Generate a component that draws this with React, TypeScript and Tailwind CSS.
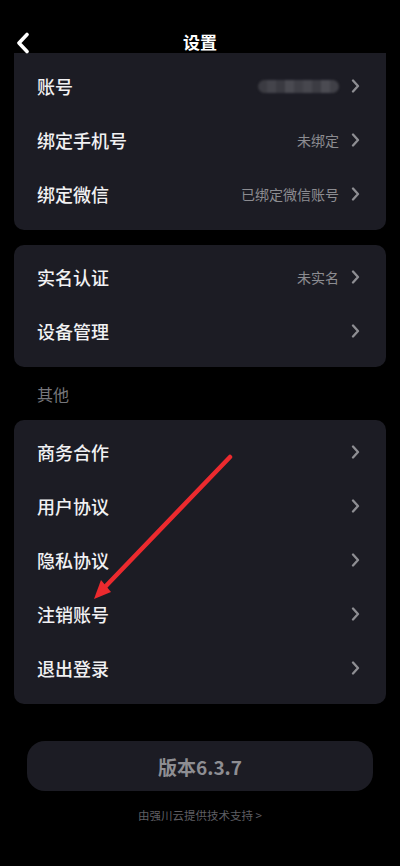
const font = { fontFamily: "'Noto Sans CJK SC', 'Noto Sans', sans-serif" };

type Row = { label: string; value?: string; blur?: boolean };

const group1: Row[] = [
  { label: "账号", blur: true },
  { label: "绑定手机号", value: "未绑定" },
  { label: "绑定微信", value: "已绑定微信账号" },
];
const group2: Row[] = [{ label: "实名认证", value: "未实名" }, { label: "设备管理" }];
const group3: Row[] = [
  { label: "商务合作" },
  { label: "用户协议" },
  { label: "隐私协议" },
  { label: "注销账号" },
  { label: "退出登录" },
];

const Chevron = () => (
  <svg width="9" height="14" viewBox="0 0 9 14" fill="none" className="ml-[12px] shrink-0">
    <polyline points="2,1.5 7,7 2,12.5" stroke="#8e8e93" strokeWidth="2.3" strokeLinecap="round" strokeLinejoin="round" />
  </svg>
);

const BackIcon = () => (
  <svg width="16" height="22" viewBox="0 0 16 22" fill="none" className="absolute left-[15px] top-[32px]">
    <polyline points="12,2.5 4,11 12,19.5" stroke="#fff" strokeWidth="3.6" strokeLinecap="round" strokeLinejoin="round" />
  </svg>
);

// pixelated blur where the account id was hidden
const BlurredId = () => (
  <div className="flex h-[13px] w-[81px] overflow-hidden rounded-full blur-[0.8px]">
    {["#3b3b42", "#44444b", "#3a3a41", "#4a4a51", "#3f3f46", "#47474e", "#3c3c43", "#4b4b52", "#404047"].map((c, i) => (
      <div key={i} className="h-full flex-1" style={{ background: c }} />
    ))}
  </div>
);

function SettingRow({ label, value, blur }: Row) {
  return (
    <div className="flex h-[54px] items-center pl-[23px] pr-[26px]">
      <span className="flex-1 text-[18px] font-medium leading-none text-[#f1f1f3]">{label}</span>
      {blur && <BlurredId />}
      {value && <span className="text-[14px] leading-none text-[#8c8c91]">{value}</span>}
      <Chevron />
    </div>
  );
}

function Card({ rows, className }: { rows: Row[]; className: string }) {
  return (
    <div className={`mx-[14px] bg-[#1c1c24] ${className}`}>
      {rows.map((r) => (
        <SettingRow key={r.label} {...r} />
      ))}
    </div>
  );
}

export default function App() {
  return (
    <div className="relative h-[866px] w-[400px] overflow-hidden bg-black" style={font}>
      {/* Header */}
      <div className="relative flex h-[53px] items-end justify-center pb-[1px]">
        <BackIcon />
        <span className="mb-[2px] text-[17px] font-bold leading-none text-white">设置</span>
      </div>

      <Card rows={group1} className="rounded-b-[10px] pt-[6px] pb-[9px]" />
      <Card rows={group2} className="mt-[15px] rounded-[10px] pt-[5px] pb-[9px]" />

      <div className="flex h-[53px] items-center pl-[37px] text-[16px] leading-none text-[#77777c]">其他</div>

      <Card rows={group3} className="rounded-[10px] pt-[5px] pb-[9px]" />

      {/* Version */}
      <div className="mx-[27px] mt-[37px] flex h-[50px] items-center justify-center rounded-[18px] bg-[#1c1c24]">
        <span className="text-[19px] font-bold leading-none text-[#8e8e93]">版本6.3.7</span>
      </div>
      <div className="mt-[19px] text-center text-[11.5px] leading-none text-[#5e5e63]">由强川云提供技术支持 &gt;</div>

      {/* annotation arrow */}
      <svg className="pointer-events-none absolute left-0 top-0" width="400" height="866">
        <line x1="230" y1="457" x2="104" y2="588" stroke="#ec2a2e" strokeWidth="4.5" strokeLinecap="round" />
        <polygon points="94,599 111,592 101,580" fill="#ec2a2e" />
      </svg>
    </div>
  );
}
